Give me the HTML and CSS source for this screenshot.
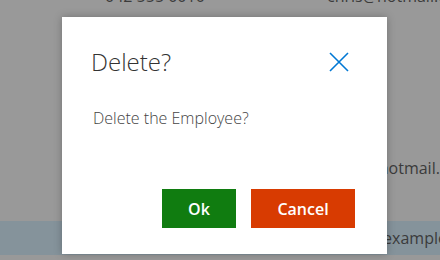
FILE: index.html
```html
<!DOCTYPE html>
<html lang="en">
	<head>
		<title>Employees</title>
		<meta http-equiv="Content-Type" content="text/html; charset=utf-8">
		<link rel="stylesheet" href="styles.css">
	</head>
	<body>
		<div class="list">
			<div class="row first">
				<span class="phone">042 555 0010</span>
				<span class="email">chris@hotmail.com</span>
			</div>
			<div class="row second">
				<span class="phone">042 555 0022</span>
				<span class="email">janet@hotmail.com</span>
			</div>
			<div class="row selected">
				<span class="phone">042 555 0031</span>
				<span class="email">sarah@example.com</span>
			</div>
		</div>
		<div class="dialog">
			<div class="dialog-head">
				<h1>Delete?</h1>
				<button class="close" title="Close">
					<svg width="20" height="20" viewBox="0 0 20 20"><path d="M1 1L19 19M19 1L1 19" stroke="#0078d4" stroke-width="1.6" fill="none"/></svg>
				</button>
			</div>
			<p>Delete the Employee?</p>
			<div class="actions">
				<button class="btn ok">Ok</button>
				<button class="btn cancel">Cancel</button>
			</div>
		</div>
	</body>
</html>
```
FILE: styles.css
```css
body {
	font-family: 'Open Sans', 'Noto Sans', sans-serif;
	margin: 0;
	background-color: #999;
	color: #3b3b3b;
	overflow: hidden;
	width: 440px;
	height: 260px;
}
.list {
	margin-top: -15px;
	font-size: 16px;
	overflow: hidden;
}
.row {
	display: flex;
	line-height: 22px;
	white-space: nowrap;
}
.row .phone {
	flex: none;
	width: 222px;
	padding-left: 105px;
}
.first {
	height: 22px;
}
.second {
	height: 64px;
	padding-top: 150px;
}
.selected {
	height: 34px;
	line-height: 34px;
	background-color: #85939b;
}
.dialog {
	position: absolute;
	left: 62px;
	top: 17px;
	width: 325px;
	height: 237px;
	box-sizing: border-box;
	padding: 23px 38px 26px 29px;
	background-color: #fff;
	box-shadow: 0 0 8px rgba(0, 0, 0, 0.25);
	display: flex;
	flex-direction: column;
}
.dialog-head {
	display: flex;
	justify-content: space-between;
	align-items: center;
	height: 42px;
}
.dialog h1 {
	margin: 0;
	font-size: 24px;
	font-weight: 300;
	color: #333;
}
.close {
	border: none;
	background: none;
	padding: 0;
	width: 20px;
	height: 20px;
	margin-top: 2px;
}
.dialog p {
	margin: 25px 0 0 2px;
	font-size: 16px;
	font-weight: 300;
	color: #444;
}
.actions {
	margin-top: auto;
	display: flex;
	justify-content: flex-end;
	gap: 15px;
	margin-right: -6px;
}
.btn {
	height: 39px;
	border: none;
	color: #fff;
	font-family: 'Open Sans', 'Noto Sans', sans-serif;
	font-size: 16px;
	font-weight: 600;
}
.ok {
	width: 74px;
	background-color: #107c10;
}
.cancel {
	width: 104px;
	background-color: #d83b01;
}
```
